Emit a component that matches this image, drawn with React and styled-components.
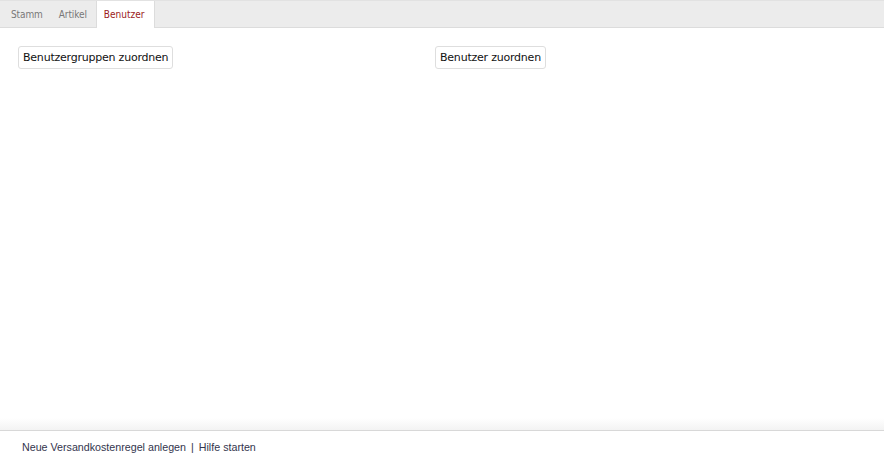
import React from "react";
import styled, { createGlobalStyle } from "styled-components";

const Global = createGlobalStyle`
  html, body { margin: 0; padding: 0; background: #fff; }
  body { width: 884px; height: 464px; overflow: hidden; }
  #root { height: 464px; }
`;

const Page = styled.div`
  height: 464px;
  display: flex;
  flex-direction: column;
`;

const TabBar = styled.div`
  height: 28px;
  box-sizing: border-box;
  background: #ececec;
  border-top: 1px solid #e2e2e2;
  border-bottom: 1px solid #dcdcdc;
  display: flex;
  align-items: stretch;
  padding-left: 3px;
`;

const Tab = styled.div`
  display: flex;
  align-items: center;
  padding: ${(p) => (p.$active ? "0 11px 0 8px" : "0 8px")};
  font-family: "DejaVu Sans Condensed", "DejaVu Sans", sans-serif;
  font-stretch: condensed;
  font-size: 10px;
  font-weight: 400;
  letter-spacing: ${(p) => (p.$active ? "0" : "-0.1px")};
  color: ${(p) => (p.$active ? "#9b1b1b" : "#787878")};
  background: ${(p) => (p.$active ? "#fff" : "transparent")};
  box-shadow: ${(p) => (p.$active ? "inset 1px 0 0 #dcdcdc, inset -1px 0 0 #dcdcdc" : "none")};
  margin-bottom: ${(p) => (p.$active ? "-1px" : "0")};
  margin-left: ${(p) => (p.$active ? "1px" : "0")};
`;

const Content = styled.div`
  flex: 1;
  display: grid;
  grid-template-columns: 417px 1fr;
  padding: 18px 0 0 18px;
  align-items: start;
`;

const Button = styled.button`
  justify-self: start;
  height: 23px;
  padding: 0 4px;
  background: #fff;
  border: 1px solid #dedede;
  border-radius: 3px;
  font-family: "DejaVu Sans", sans-serif;
  font-size: 11px;
  letter-spacing: -0.22px;
  color: #111;
  cursor: pointer;
`;

const Footer = styled.div`
  height: 34px;
  box-sizing: border-box;
  border-top: 1px solid #d8d8d8;
  position: relative;
  display: flex;
  align-items: center;
  padding: 0 0 1px 22px;
  font-family: "Liberation Sans", Arial, sans-serif;
  font-size: 10.7px;
  color: #33354d;
  &::before {
    content: "";
    position: absolute;
    left: 0;
    right: 0;
    top: -13px;
    height: 12px;
    background: linear-gradient(to bottom, rgba(244,244,244,0), #f3f3f3);
  }
`;

const Link = styled.span`
  color: #33354d;
`;

const Sep = styled.span`
  margin: 0 5px;
`;

export default function App() {
  return (
    <Page>
      <Global />
      <TabBar>
        <Tab>Stamm</Tab>
        <Tab>Artikel</Tab>
        <Tab $active>Benutzer</Tab>
      </TabBar>
      <Content>
        <Button>Benutzergruppen zuordnen</Button>
        <Button>Benutzer zuordnen</Button>
      </Content>
      <Footer>
        <Link>Neue Versandkostenregel anlegen</Link>
        <Sep>|</Sep>
        <Link>Hilfe starten</Link>
      </Footer>
    </Page>
  );
}
